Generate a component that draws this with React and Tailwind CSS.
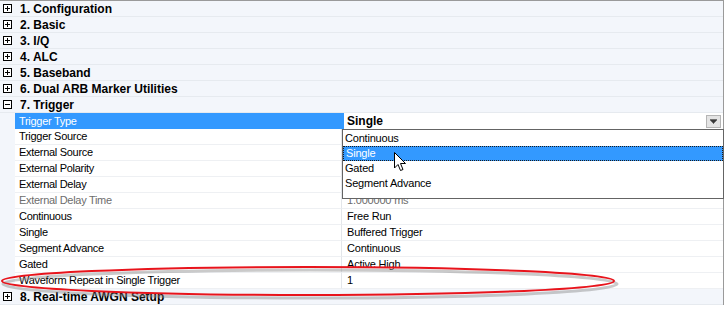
import React from 'react';

const categories = [
  '1. Configuration',
  '2. Basic',
  '3. I/Q',
  '4. ALC',
  '5. Baseband',
  '6. Dual ARB Marker Utilities',
];

const triggerRows = [
  { name: 'Trigger Source', value: '' },
  { name: 'External Source', value: '' },
  { name: 'External Polarity', value: '' },
  { name: 'External Delay', value: '' },
  { name: 'External Delay Time', value: '1.000000 ms', disabled: true },
  { name: 'Continuous', value: 'Free Run' },
  { name: 'Single', value: 'Buffered Trigger' },
  { name: 'Segment Advance', value: 'Continuous' },
  { name: 'Gated', value: 'Active High' },
  { name: 'Waveform Repeat in Single Trigger', value: '1' },
];

const options = ['Continuous', 'Single', 'Gated', 'Segment Advance'];

const ExpandBox = ({ open }) => (
  <div className="w-[9px] h-[9px] border border-black bg-white relative shrink-0">
    <div className="absolute left-[1px] right-[1px] top-[3px] h-px bg-black" />
    {!open && <div className="absolute top-[1px] bottom-[1px] left-[3px] w-px bg-black" />}
  </div>
);

const CategoryRow = ({ label, open }) => (
  <div className="h-[16px] flex items-center bg-[#f3f6fb] border-b border-[#e6eaef]">
    <div className="w-[20px] pl-[3px] flex items-center">
      <ExpandBox open={open} />
    </div>
    <span className="font-bold text-[12px] leading-none text-black">{label}</span>
  </div>
);

const PropRow = ({ name, value, disabled }) => (
  <div className="h-[16px] flex bg-[#f3f6fb]">
    <div className="w-[15px]" />
    <div className={`w-[327px] pl-[4px] flex items-center bg-white border-b border-[#eef0f3] border-r border-r-[#e3e6ea] text-[11px] tracking-[-0.3px] ${disabled ? 'text-[#6d6d6d]' : 'text-black'}`}>
      {name}
    </div>
    <div className={`flex-1 pl-[5px] flex items-center bg-white border-b border-[#eef0f3] text-[11px] tracking-[-0.2px] ${disabled ? 'text-[#6d6d6d]' : 'text-black'}`}>
      {value}
    </div>
  </div>
);

export default function App() {
  return (
    <div
      className="relative w-[725px] h-[311px] bg-white overflow-hidden select-none"
      style={{ fontFamily: '"Liberation Sans", Arial, sans-serif' }}
    >
      <div className="w-[724px] border-t border-r border-[#9a9a9a] bg-white">
        {categories.map((c) => (
          <CategoryRow key={c} label={c} />
        ))}
        <CategoryRow label="7. Trigger" open />

        {/* selected row */}
        <div className="h-[16px] flex bg-[#f3f6fb]">
          <div className="w-[15px]" />
          <div className="w-[327px] pl-[4px] flex items-center bg-[#3399ff] text-white text-[11px] tracking-[-0.3px]">
            Trigger Type
          </div>
          <div className="flex-1 flex items-center bg-white border-l-2 border-[#3399ff]">
            <span className="pl-[3px] font-bold text-[12px] text-black flex-1">Single</span>
            <div className="w-[15px] h-[13px] mr-[2px] bg-[#e4e4e4] border border-[#b5b5b5] flex items-center justify-center">
              <svg width="7" height="5" viewBox="0 0 7 5">
                <path d="M0 1h7M1 2h5M2 3h3M3 4h1" stroke="#000" strokeWidth="1" />
              </svg>
            </div>
          </div>
        </div>

        {triggerRows.map((r) => (
          <PropRow key={r.name} {...r} />
        ))}
        <CategoryRow label="8. Real-time AWGN Setup" />
      </div>

      {/* dropdown list */}
      <div className="absolute left-[342px] top-[129px] w-[382px] h-[70px] pt-[1px] bg-white border border-[#646464] text-[11px] tracking-[-0.2px] text-black">
        {options.map((o) => (
          <div
            key={o}
            className={`h-[15px] pl-[2px] flex items-center ${o === 'Single' ? 'bg-[#3399ff] text-white border border-dotted border-[#1c1c1c] pl-[1px]' : ''}`}
          >
            {o}
          </div>
        ))}
      </div>

      {/* cursor */}
      <svg className="absolute left-[394px] top-[152px]" width="13" height="20" viewBox="0 0 13 20">
        <path
          d="M0.5 0.5 L0.5 16 L4 12.5 L6.5 18.5 L9 17.5 L6.5 11.5 L11.5 11.5 Z"
          fill="#fff"
          stroke="#000"
          strokeWidth="1"
          strokeLinejoin="miter"
        />
      </svg>

      {/* red highlight ring */}
      <svg className="absolute left-0 top-0 pointer-events-none" width="725" height="311" viewBox="0 0 725 311">
        <ellipse cx="310" cy="284" rx="307" ry="14" fill="none" stroke="#8a8a8a" strokeOpacity="0.45" strokeWidth="3" />
        <ellipse cx="308" cy="281" rx="306" ry="14" fill="none" stroke="#e8141c" strokeWidth="2" />
      </svg>
    </div>
  );
}
